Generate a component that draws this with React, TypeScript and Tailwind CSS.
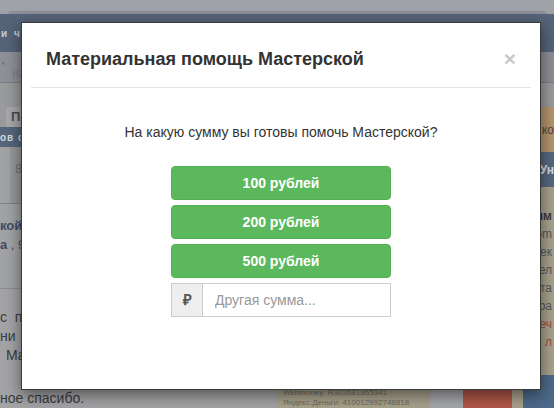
import React from "react";

const amounts = ["100 рублей", "200 рублей", "500 рублей"];

function LeftColumn() {
  return (
    <div className="flex w-[277px] shrink-0 flex-col">
      <div className="flex h-[30px] items-start bg-[#8e9198] pl-[2px] pt-[6px] text-[12px] text-[#5d6066]">
        <span>'</span>
        <span className="ml-[8px] mt-[6px] text-[#7c7f86]">на</span>
      </div>
      <div className="h-px bg-[#7d7f84]" />
      <div className="h-[24px] bg-[#9a9b9d]" />
      <div className="flex h-[20px] bg-[#9a9b9d] pl-[6px]">
        <div className="flex w-[40px] items-center rounded-t-[3px] bg-[#a9a9ab] pl-[5px] text-[13px] font-bold text-[#4a4d52]">
          По
        </div>
      </div>
      <div className="flex h-[20px] items-center bg-[#56667b] pl-[0px] text-[10px] font-bold tracking-[1px] text-[#d6dbe2]">
        ов с
      </div>
      <div className="flex h-[56px] bg-[#98999b]">
        <div className="w-[10px] bg-[#a2a3a5]" />
        <div className="pl-[5px] pt-[12px] text-[13px] text-[#6f7174]">8</div>
      </div>
      <div className="h-px bg-[#7f8083]" />
      <div className="flex h-[84px] flex-col bg-[#a2a3a5] pt-[12px] text-[13px] leading-[19px]">
        <div className="font-bold text-[#3e4d63]">кой</div>
        <div className="text-[#4b4d52]">
          <span className="font-bold text-[#3e4d63]">а</span> , 9
        </div>
      </div>
      <div className="h-px bg-[#8c8d90]" />
      <div className="flex flex-1 bg-[#a4a4a6]">
        <div className="flex flex-col pt-[19px] text-[14px] leading-[19px] text-[#3b3c3f]">
          <div className="whitespace-nowrap">с&nbsp;&nbsp;по</div>
          <div className="whitespace-nowrap">ни&nbsp;&nbsp;с</div>
          <div className="ml-[6px] whitespace-nowrap">Ма</div>
          <div className="mt-[24px] whitespace-nowrap">ное спасибо.</div>
        </div>
      </div>
    </div>
  );
}

function RightColumn() {
  const lines = [
    { t: "им", c: "text-[#3b3c3f] font-bold" },
    { t: "оm", c: "text-[#55565a]" },
    { t: "ек", c: "text-[#55565a]" },
    { t: "цел", c: "text-[#55565a]" },
    { t: "та", c: "text-[#55565a]" },
    { t: "ра", c: "text-[#55565a]" },
    { t: "еч", c: "text-[#a14a3a]" },
    { t: "й л", c: "text-[#a14a3a]" },
  ];
  return (
    <div className="flex w-[277px] shrink-0 flex-col">
      <div className="h-[30px] bg-[#8d8f96]" />
      <div className="h-px bg-[#7d7f84]" />
      <div className="h-[24px] bg-[#9a9b9d]" />
      <div className="flex h-[45px] items-center justify-end bg-[#b4956c] pr-[0px] text-[12px] text-[#4d4438]">
        ко
      </div>
      <div className="flex h-[35px] items-center justify-end bg-[#55677e] text-[12px] font-bold text-[#d8dde4]">
        Ун
      </div>
      <div className="flex h-[188px] flex-col items-end bg-[#a8a28c] pt-[20px] text-[12px] leading-[18px]">
        {lines.map((l) => (
          <div key={l.t} className={"whitespace-nowrap pr-[2px] " + l.c}>
            {l.t}
          </div>
        ))}
      </div>
      <div className="flex flex-1">
        <div className="flex w-[246px] shrink-0 flex-col bg-[#a8a28c]">
          <div className="h-[12px]" />
          <div className="flex flex-1">
            <div className="w-[153px] shrink-0 pl-[6px] pt-[1px] text-[8px] leading-[10px] text-[#6d6a5c]">
              <div className="whitespace-nowrap">Webmoney: R303681865341</div>
              <div className="whitespace-nowrap">Яндекс.Деньги: 410012992748818</div>
            </div>
            <div className="w-[33px] bg-[#a7a8ac]" />
            <div className="w-[49px] bg-[#b1574a]" />
            <div className="flex-1 bg-[#a8a28c]" />
          </div>
        </div>
        <div className="flex-1 bg-[#4d6a8b]" />
      </div>
    </div>
  );
}

export default function App() {
  return (
    <div
      className="relative h-[408px] w-[554px] overflow-hidden bg-[#9fa1a9]"
      style={{ fontFamily: '"Liberation Sans", Arial, sans-serif' }}
    >
      {/* background page */}
      <div className="flex h-full flex-col">
        <div className="h-[12px] bg-[#a0a2aa]" />
        <div className="mx-[8px] h-[3px] rounded-t-[4px] bg-[#8c8f97]" />
        <div className="flex h-[40px] items-center bg-[#566479] text-[10px] font-bold tracking-[2px] text-[#c9ced6]">
          <span className="pl-[1px]">и ч</span>
        </div>
        <div className="flex flex-1">
          <LeftColumn />
          <RightColumn />
        </div>
      </div>

      {/* modal */}
      <div className="absolute left-[21px] top-[22px] flex h-[368px] w-[520px] flex-col border border-[#3a3a3a] bg-white p-[9px] shadow-[0_5px_15px_rgba(0,0,0,0.5)]">
        <div className="flex h-[56px] items-center justify-between border-b border-[#e5e5e5] px-[15px]">
          <h4 className="text-[18px] font-bold leading-[25px] text-[#333333]">
            Материальная помощь Мастерской
          </h4>
          <button className="-mt-[3px] text-[21px] font-bold leading-none text-[#c8c8c8]">
            ×
          </button>
        </div>
        <div className="flex flex-col items-center">
          <p className="mt-[34px] text-[14px] leading-[20px] text-[#333333]">
            На какую сумму вы готовы помочь Мастерской?
          </p>
          <div className="mt-[24px] flex w-[220px] flex-col gap-[5px]">
            {amounts.map((a) => (
              <button
                key={a}
                className="h-[34px] rounded-[4px] border border-[#52b252] bg-[#5cb85c] text-[14px] font-bold text-white"
              >
                {a}
              </button>
            ))}
            <div className="flex h-[34px]">
              <div className="flex w-[32px] items-center justify-center border border-[#cccccc] bg-[#eeeeee] text-[15px] font-bold text-[#555555]">
                ₽
              </div>
              <input
                className="h-full min-w-0 flex-1 border border-l-0 border-[#cccccc] px-[12px] text-[14px] text-[#555555] outline-none placeholder:text-[#999999]"
                placeholder="Другая сумма..."
              />
            </div>
          </div>
        </div>
      </div>
    </div>
  );
}
